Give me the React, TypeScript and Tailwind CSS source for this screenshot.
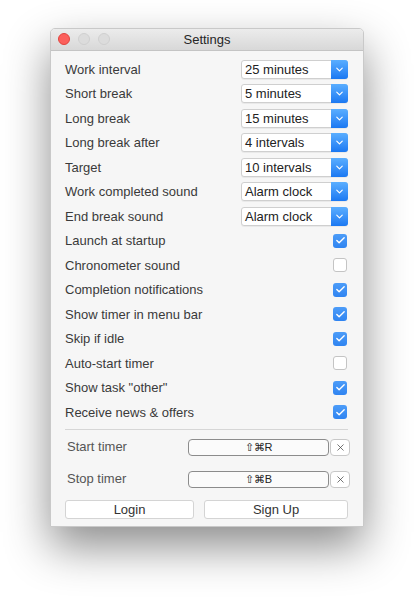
import { Check, ChevronDown, X } from "lucide-react";

const selects = [
  { label: "Work interval", value: "25 minutes" },
  { label: "Short break", value: "5 minutes" },
  { label: "Long break", value: "15 minutes" },
  { label: "Long break after", value: "4 intervals" },
  { label: "Target", value: "10 intervals" },
  { label: "Work completed sound", value: "Alarm clock" },
  { label: "End break sound", value: "Alarm clock" },
];

const checks = [
  { label: "Launch at startup", on: true },
  { label: "Chronometer sound", on: false },
  { label: "Completion notifications", on: true },
  { label: "Show timer in menu bar", on: true },
  { label: "Skip if idle", on: true },
  { label: "Auto-start timer", on: false },
  { label: 'Show task "other"', on: true },
  { label: "Receive news & offers", on: true },
];

const Select = ({ value }: { value: string }) => (
  <div className="flex h-[19px] w-[107px] items-stretch rounded-[3px] border border-[#cfcfcf] bg-white shadow-[0_1px_0_rgba(0,0,0,0.05)]">
    <span className="flex-1 pl-[3px] text-[13px] leading-[18px] text-[#222]">{value}</span>
    <span className="-my-px -mr-px flex w-[17px] items-center justify-center rounded-r-[3px] bg-gradient-to-b from-[#5aaeff] to-[#1a78f2]">
      <ChevronDown size={11} strokeWidth={2.5} className="text-white" />
    </span>
  </div>
);

const Box = ({ on }: { on: boolean }) =>
  on ? (
    <span className="flex h-[14px] w-[14px] items-center justify-center rounded-[3px] bg-gradient-to-b from-[#4c9cf8] to-[#2f84f1]">
      <Check size={11} strokeWidth={3} className="text-white" />
    </span>
  ) : (
    <span className="h-[14px] w-[14px] rounded-[3px] border border-[#c4c4c4] bg-white" />
  );

const Shortcut = ({ keys }: { keys: string }) => (
  <div className="-mr-[2px] flex items-center">
    <div className="flex h-[17px] w-[141px] items-center justify-center rounded-[4px] border border-[#8c8c8c] bg-[#fbfbfb] text-[11px] text-[#222]">
      {keys}
    </div>
    <div className="ml-px flex h-[17px] w-[20px] items-center justify-center rounded-[4px] border border-[#c8c8c8] bg-white">
      <X size={11} strokeWidth={1.6} className="text-[#444]" />
    </div>
  </div>
);

export default function App() {
  return (
    <div className="h-[600px] w-[414px] bg-white pl-[50px] pt-[28px] font-['Liberation_Sans',Arial,sans-serif]">
      <div className="flex h-[499px] w-[314px] flex-col overflow-hidden rounded-t-[5px] border border-[#c9c9c9] bg-[#f6f6f6] shadow-[0_20px_45px_rgba(0,0,0,0.45)]">
        <div className="relative flex h-[22px] items-center justify-center border-b border-[#c4c4c4] bg-gradient-to-b from-[#ececec] to-[#d8d8d8]">
          <div className="absolute left-[7px] top-[4px] flex gap-[8px]">
            <span className="h-[12px] w-[12px] rounded-full border border-[#e0443e] bg-[#fc605c]" />
            <span className="h-[12px] w-[12px] rounded-full border border-[#cfcfcf] bg-[#dcdcdc]" />
            <span className="h-[12px] w-[12px] rounded-full border border-[#cfcfcf] bg-[#dcdcdc]" />
          </div>
          <span className="text-[13px] text-[#262626]">Settings</span>
        </div>

        <div className="flex flex-col pl-[14px] pr-[15px] pt-[6px]">
          {selects.map((s) => (
            <div key={s.label} className="flex h-[24.5px] items-center justify-between">
              <span className="text-[13px] text-[#3a3a3a]">{s.label}</span>
              <Select value={s.value} />
            </div>
          ))}
          {checks.map((c) => (
            <div key={c.label} className="flex h-[24.5px] items-center justify-between pr-[1px]">
              <span className="text-[13px] text-[#3a3a3a]">{c.label}</span>
              <Box on={c.on} />
            </div>
          ))}
          <div className="mt-[4px] h-px bg-[#d6d6d6]" />
          <div className="mt-[9px] flex h-[17px] items-center justify-between pl-[2px]">
            <span className="text-[13px] text-[#555]">Start timer</span>
            <Shortcut keys="⇧⌘R" />
          </div>
          <div className="mt-[15px] flex h-[17px] items-center justify-between pl-[2px]">
            <span className="text-[13px] text-[#555]">Stop timer</span>
            <Shortcut keys="⇧⌘B" />
          </div>
          <div className="mt-[12px] flex gap-[10px]">
            <button className="h-[19px] w-[130px] rounded-[3px] border border-[#d4d4d4] bg-white text-[13px] leading-[17px] text-[#333]">
              Login
            </button>
            <button className="h-[19px] w-[145px] rounded-[3px] border border-[#d4d4d4] bg-white text-[13px] leading-[17px] text-[#333]">
              Sign Up
            </button>
          </div>
        </div>
      </div>
    </div>
  );
}
